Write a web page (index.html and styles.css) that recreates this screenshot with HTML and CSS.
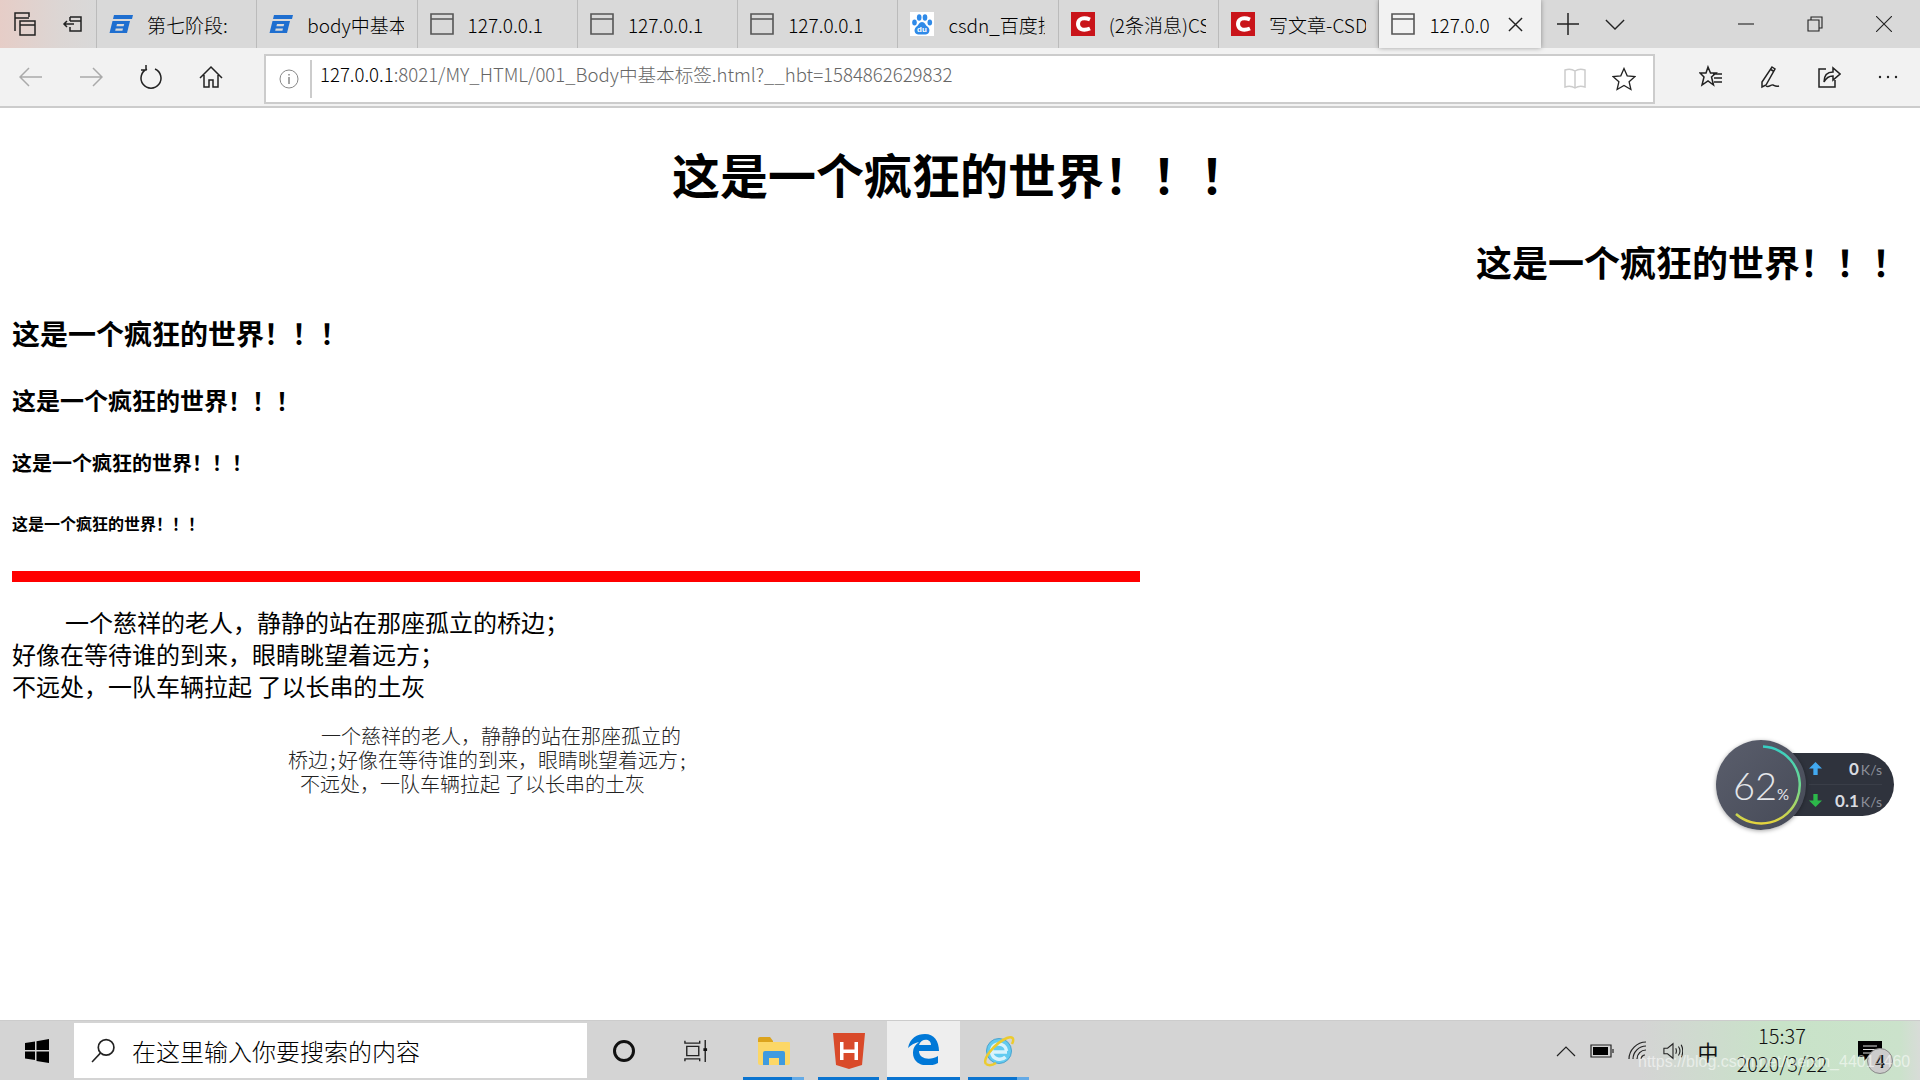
FILE: index.html
```html
<!DOCTYPE html>
<html lang="zh-CN">
<head>
    <meta charset="UTF-8" />
    <title>127.0.0.1</title>
    <link rel="stylesheet" href="styles.css">
</head>
<body>
    <div class="screen">
        <!-- tab strip -->
        <div class="tabbar">
            <div class="tab-tools">
                <svg class="icon" viewBox="0 0 24 24"><path d="M2 19V1h14v4M2 6h14M7 23V9h15v14zM7 13h15" /></svg>
                <svg class="icon" viewBox="0 0 24 24"><path d="M9 5h11v14H9v-4M9 9v-4M9 9h11M3 12h10M6 9l-3 3 3 3" /></svg>
            </div>
            <div class="tab">
                <svg class="fav" viewBox="0 0 24 24"><path class="fav-blue" d="M5 3h19l-1 4H4zM3.500 9H21l-3 12H.5zM8 12l-.6 2.300h7.200l.6-2.300zM6.700 16.500L6.200 18.800h7.200l.6-2.300z" /></svg>
                <span class="tab-title">第七阶段:</span>
            </div>
            <div class="tab">
                <svg class="fav" viewBox="0 0 24 24"><path class="fav-blue" d="M5 3h19l-1 4H4zM3.500 9H21l-3 12H.5zM8 12l-.6 2.300h7.200l.6-2.300zM6.700 16.500L6.200 18.800h7.200l.6-2.300z" /></svg>
                <span class="tab-title">body中基本标签</span>
            </div>
            <div class="tab">
                <svg class="fav page" viewBox="0 0 24 24"><path d="M1 2h22v20H1zM1 7h22" /></svg>
                <span class="tab-title">127.0.0.1</span>
            </div>
            <div class="tab">
                <svg class="fav page" viewBox="0 0 24 24"><path d="M1 2h22v20H1zM1 7h22" /></svg>
                <span class="tab-title">127.0.0.1</span>
            </div>
            <div class="tab">
                <svg class="fav page" viewBox="0 0 24 24"><path d="M1 2h22v20H1zM1 7h22" /></svg>
                <span class="tab-title">127.0.0.1</span>
            </div>
            <div class="tab">
                <svg class="fav baidu" viewBox="0 0 24 24">
                    <rect width="24" height="24" />
                    <ellipse cx="4.500" cy="10.500" rx="2.300" ry="3" />
                    <ellipse cx="9.200" cy="5.500" rx="2.300" ry="3.200" />
                    <ellipse cx="15" cy="5.500" rx="2.300" ry="3.200" />
                    <ellipse cx="19.800" cy="10.500" rx="2.300" ry="3" />
                    <path class="paw" d="M12 10c-3 0-3 3-6 5-3 3-1 8 3 7.500h6c4 .5 6-4.500 3-7.500-3-2-3-5-6-5z" />
                    <text x="12" y="20" class="du">du</text>
                </svg>
                <span class="tab-title">csdn_百度搜索</span>
            </div>
            <div class="tab">
                <svg class="fav csdn" viewBox="0 0 24 24"><rect width="24" height="24" /><path class="csdn-c" d="M19 7.500c-7-3-12-.5-12 4.500s5 7.500 12 4.500" /></svg>
                <span class="tab-title">(2条消息)CSDN</span>
            </div>
            <div class="tab">
                <svg class="fav csdn" viewBox="0 0 24 24"><rect width="24" height="24" /><path class="csdn-c" d="M19 7.500c-7-3-12-.5-12 4.500s5 7.500 12 4.500" /></svg>
                <span class="tab-title">写文章-CSDN</span>
            </div>
            <div class="tab active">
                <svg class="fav page" viewBox="0 0 24 24"><path d="M1 2h22v20H1zM1 7h22" /></svg>
                <span class="tab-title">127.0.0.1</span>
                <svg class="tab-close" viewBox="0 0 16 16"><path d="M1 1l14 14M15 1L1 15" /></svg>
            </div>
            <div class="tab-actions">
                <svg class="plus" viewBox="0 0 22 22"><path d="M11 0v22M0 11h22" /></svg>
                <svg class="chevron" viewBox="0 0 22 12"><path d="M1 1l10 10L21 1" /></svg>
            </div>
            <div class="win-buttons">
                <svg class="win-btn" viewBox="0 0 16 16"><path d="M0 8h16" /></svg>
                <svg class="win-btn" viewBox="0 0 16 16"><path d="M1 4h11v11H1zM4 4V1h11v11h-3" /></svg>
                <svg class="win-btn" viewBox="0 0 16 16"><path d="M0 0l16 16M16 0L0 16" /></svg>
            </div>
        </div>

        <!-- address bar -->
        <div class="toolbar">
            <div class="nav-buttons">
                <svg class="icon nav-off" viewBox="0 0 24 24"><path d="M1 12h22M10 3l-9 9 9 9" /></svg>
                <svg class="icon nav-off" viewBox="0 0 24 24"><path d="M1 12h22M14 3l9 9-9 9" /></svg>
                <svg class="icon" viewBox="0 0 24 24"><path d="M8 4a10 10 0 1 0 8 0M7 0v5H2" /></svg>
                <svg class="icon" viewBox="0 0 24 24"><path d="M1 13L12 2l11 11M5 10v12h5v-7h4v7h5V10" /></svg>
            </div>
            <div class="address">
                <svg class="info" viewBox="0 0 20 20"><circle cx="10" cy="10" r="9" /><path d="M10 8v7M10 5v1.500" /></svg>
                <div class="url"><span class="host">127.0.0.1</span>:8021/MY_HTML/001_Body中基本标签.html?__hbt=1584862629832</div>
                <svg class="icon reader" viewBox="0 0 24 24"><path d="M12 4C9 2 5 2 2 3v17c3-1 7-1 10 1 3-2 7-2 10-1V3c-3-1-7-1-10 1zM12 4v17" /></svg>
                <svg class="icon star" viewBox="0 0 24 24"><path d="M12 1.500l3.200 7.300 7.800.7-5.900 5.200 1.800 7.800-6.900-4.100-6.900 4.100 1.800-7.800L1 9.500l7.800-.7z" /></svg>
            </div>
            <div class="tool-buttons">
                <svg class="icon" viewBox="0 0 24 24"><path d="M9 2l2.500 6H17l-4.500 4 2 8L9 16l-6 4 2-8-4-4h6zM14 9h9M15 13h8M15 17h8" /></svg>
                <svg class="icon" viewBox="0 0 24 24"><path d="M14 2l3 2-9 16-4 2 0-5zM12 4l4 2.500M8 21c3 2 5-2 7-1s3 2 6 1" /></svg>
                <svg class="icon" viewBox="0 0 24 24"><path d="M9 4H2v18h16v-7M7 17c0-7 4-10 9-10V3l7 6-7 6v-4c-4 0-7 2-9 6z" /></svg>
                <svg class="icon more" viewBox="0 0 24 24"><circle cx="4" cy="12" r="1.200" /><circle cx="12" cy="12" r="1.200" /><circle cx="20" cy="12" r="1.200" /></svg>
            </div>
        </div>

        <!-- page content -->
        <div class="page-body">
            <h1>这是一个疯狂的世界！！！</h1>
            <h2>这是一个疯狂的世界！！！</h2>
            <h3>这是一个疯狂的世界！！！</h3>
            <h4>这是一个疯狂的世界！！！</h4>
            <h5>这是一个疯狂的世界！！！</h5>
            <h6>这是一个疯狂的世界！！！</h6>
            <hr class="red-line" />
            <p class="poem">
                <span class="first">一个慈祥的老人，静静的站在那座孤立的桥边；</span><br />
                好像在等待谁的到来，眼睛眺望着远方；<br />
                不远处，一队车辆拉起 了以长串的土灰
            </p>
            <p class="poem-small">
                <span class="line-one">一个慈祥的老人，静静的站在那座孤立的</span>
                <span class="line-two">桥边<b class="semi">;</b>好像在等待谁的到来，眼睛眺望着远方<b class="semi">;</b></span>
                <span class="line-three">不远处，一队车辆拉起 了以长串的土灰</span>
            </p>
        </div>

        <!-- windows taskbar -->
        <div class="taskbar">
            <div class="start">
                <svg class="win-logo" viewBox="0 0 24 24"><path d="M0 4l10-1.500V11H0zM11.500 2.300L24 0v11H11.500zM0 12.500h10V21L0 19.600zM11.500 12.500H24V24l-12.500-2z" /></svg>
            </div>
            <div class="search">
                <svg class="search-icon" viewBox="0 0 24 24"><circle cx="14.500" cy="9" r="7.500" /><path d="M9 14.500L1 23" /></svg>
                <span>在这里输入你要搜索的内容</span>
            </div>
            <div class="task-cell"><div class="cortana"></div></div>
            <div class="task-cell">
                <svg class="taskview" viewBox="0 0 26 24"><path d="M1 1v2.500h16V1M3 7h13v10H3zM1 23v-2.500h16V23M23 0v24" /><rect x="21" y="9" width="4" height="3" /></svg>
            </div>
            <div class="task-cell open">
                <svg class="app folder" viewBox="0 0 32 28">
                    <path class="folder-tab" d="M0 2a2 2 0 0 1 2-2h10l3 4v3H0z" />
                    <path class="folder-body" d="M0 5h31a1 1 0 0 1 1 1v20a2 2 0 0 1-2 2H2a2 2 0 0 1-2-2z" />
                    <path class="folder-arch" d="M5 28V16a2 2 0 0 1 2-2h18a2 2 0 0 1 2 2v12h-6v-7H11v7z" />
                </svg>
            </div>
            <div class="task-cell open single">
                <svg class="app hbuilder" viewBox="0 0 32 36">
                    <path class="shield" d="M0 0h32l-3 32-13 4-13-4z" />
                    <path class="shield-h" d="M7 9h3.500v7.500h11V9H25v18h-3.500v-7h-11v7H7z" />
                </svg>
            </div>
            <div class="task-cell edge-cell">
                <svg class="app" viewBox="0 0 32 32">
                    <path class="edge-e" d="M0 15C2 5 9 1 17 1c9 0 14 7 14 17H11c0 8 11 10 19 5v7c-9 5-25 3-25-10 0-5 2-8 6-11-5 1-8 3-11 6zM11 12h12c0-7-10-7-12 0z" />
                </svg>
            </div>
            <div class="task-cell open">
                <svg class="app" viewBox="0 0 32 32">
                    <circle class="ie-body" cx="16" cy="16" r="12.500" />
                    <path class="ie-e" d="M24 17H8.500M8.500 15c1-8 14-8 15 1M8.500 17c1 8 10 9 14 5" />
                    <path class="ie-ring" d="M3 29C-1 24 12 8 24 3c5-2 8 0 5 6" />
                    <path class="ie-ring" d="M3 29c3 2 7 1 10-1" />
                </svg>
            </div>
            <div class="tray">
                <div class="tray-cell">
                    <svg class="tray-icon" viewBox="0 0 20 20"><path d="M1 15l9-9 9 9" /></svg>
                </div>
                <div class="tray-cell">
                    <svg class="tray-icon battery" viewBox="0 0 24 16"><path d="M1 2h20v12H1zM23 6v4" /><rect x="3" y="4" width="15" height="8" /></svg>
                </div>
                <div class="tray-cell">
                    <svg class="tray-icon" viewBox="0 0 20 20"><path d="M1 18C1 9 9 1 18 1M5 18c0-7 6-13 13-13M9 18c0-5 4-9 9-9M13 18c0-2 2-4 4-4" /></svg>
                </div>
                <div class="tray-cell vol-cell">
                    <svg class="tray-icon" viewBox="0 0 22 20"><path d="M1 7h4l6-5v16l-6-5H1zM14 7c1 2 1 4 0 6M17 5c2 3 2 7 0 10M20 3c2 4 2 10 0 14" /></svg>
                </div>
                <div class="tray-cell ime">中</div>
                <div class="clock">
                    <div>15:37</div>
                    <div>2020/3/22</div>
                </div>
                <div class="notify">
                    <svg class="notify-icon" viewBox="0 0 24 20"><path d="M0 0h24v16h-14l-4 4v-4H0z" /><path class="notify-lines" d="M5 5h14M5 8.500h14M5 12h14" /></svg>
                    <div class="notify-badge">4</div>
                </div>
            </div>
        </div>

        <!-- floating network meter -->
        <div class="meter">
            <div class="meter-pill">
                <div class="meter-row">
                    <svg class="arrow arrow-up" viewBox="0 0 12 12"><path d="M6 0l6 6H8v6H4V6H0z" /></svg>
                    <span class="rate">0<small>K/s</small></span>
                </div>
                <div class="meter-row">
                    <svg class="arrow arrow-down" viewBox="0 0 12 12"><path d="M6 12L0 6h4V0h4v6h4z" /></svg>
                    <span class="rate">0.1<small>K/s</small></span>
                </div>
            </div>
            <div class="meter-dial">
                <svg class="meter-ring" viewBox="0 0 90 90">
                    <defs>
                        <linearGradient id="ring-grad" gradientUnits="userSpaceOnUse" x1="0" y1="6" x2="0" y2="84">
                            <stop offset="0" stop-color="#36cfc4" />
                            <stop offset="0.55" stop-color="#74d98a" />
                            <stop offset="1" stop-color="#e6d33c" />
                        </linearGradient>
                    </defs>
                    <path d="M47 6.500A38.500 38.500 0 1 1 20 74" />
                </svg>
                <span class="percent">62<small>%</small></span>
            </div>
        </div>

        <div class="watermark">https://blog.csdn.net/weixin_44014460</div>
    </div>
</body>
</html>
```

FILE: styles.css
```css
* {
    box-sizing: border-box;
}

body {
    margin: 0;
    font-family: "Noto Sans CJK SC", "Liberation Sans", sans-serif;
    color: #000;
    background: #fff;
}

svg {
    display: block;
    flex: none;
}

svg path {
    fill: none;
    stroke: #222;
    stroke-width: 1.5;
}

.screen {
    position: relative;
    width: 1920px;
    height: 1080px;
    display: flex;
    flex-direction: column;
    overflow: hidden;
}

/* tab strip */
.tabbar {
    height: 48px;
    flex: none;
    display: flex;
    background: #d9d9d9;
}

.tab-tools {
    width: 97px;
    flex: none;
    display: flex;
    align-items: center;
    gap: 24px;
    padding-left: 13px;
    background: linear-gradient(90deg, #e6cdc7 0, #dcd6d4 60px, #d9d9d9 97px);
    border-right: 1px solid #bbb;
}

.icon {
    width: 24px;
    height: 24px;
}

.tab {
    width: 160.3px;
    flex: none;
    display: flex;
    align-items: center;
    padding-left: 12px;
    gap: 14px;
    border-right: 1px solid #bbb;
    font-size: 19px;
    font-weight: 300;
    color: #000;
}

.tab.active {
    position: relative;
    width: 162px;
    background: #f2f2f2;
    border-right: none;
    box-shadow: 0 0 5px rgba(0, 0, 0, 0.35);
}

.fav {
    width: 24px;
    height: 24px;
}

.fav .fav-blue {
    fill: #1f6fd0;
    fill-rule: evenodd;
    stroke: none;
}

.fav.page path {
    stroke: #555;
    stroke-width: 1.6;
}

.baidu rect {
    fill: #fff;
}

.baidu ellipse, .baidu .paw {
    fill: #2f8ae8;
    stroke: none;
}

.baidu .du {
    fill: #fff;
    font-family: "Liberation Sans", sans-serif;
    font-size: 8px;
    font-weight: 700;
    text-anchor: middle;
}

.csdn rect {
    fill: #c9141a;
}

.fav .csdn-c {
    stroke: #fff;
    stroke-width: 4;
}

.tab-title {
    width: 97px;
    overflow: hidden;
    white-space: nowrap;
}

.tab.active .tab-title {
    width: 61px;
}

.tab-close {
    width: 15px;
    height: 15px;
    margin-left: 4px;
}

.tab-actions {
    display: flex;
    align-items: center;
    gap: 26px;
    padding-left: 16px;
}

.plus {
    width: 22px;
    height: 22px;
}

.chevron {
    width: 20px;
    height: 11px;
}

.win-buttons {
    margin-left: auto;
    display: flex;
    align-items: center;
    gap: 53px;
    padding-right: 28px;
}

.win-btn {
    width: 16px;
    height: 16px;
}

.win-btn path {
    stroke-width: 1.1;
}

/* address bar */
.toolbar {
    height: 60px;
    flex: none;
    display: flex;
    align-items: flex-start;
    background: #f2f2f2;
    border-bottom: 2px solid #ccc;
}

.nav-buttons {
    width: 264px;
    height: 58px;
    flex: none;
    display: flex;
    align-items: center;
    gap: 36px;
    padding-left: 19px;
}

.nav-off path {
    stroke: #aaa;
}

.address {
    width: 1391px;
    height: 50px;
    flex: none;
    margin-top: 6px;
    display: flex;
    align-items: center;
    background: #fff;
    border: 2px solid #ccc;
}

.info {
    width: 20px;
    height: 20px;
    margin-left: 13px;
}

.info circle {
    fill: none;
    stroke: #888;
    stroke-width: 1;
}

.info path {
    stroke: #888;
}

.url {
    margin-left: 11px;
    padding-left: 8px;
    height: 38px;
    line-height: 28px;
    border-left: 2px solid #ccc;
    font-size: 18.6px;
    font-weight: 300;
    color: #666;
    white-space: nowrap;
    flex: 1;
}

.host {
    color: #000;
}

.reader path {
    stroke: #ccc;
}

.star {
    margin-left: 25px;
    margin-right: 17px;
}

.star path {
    stroke-width: 1.3;
}

.tool-buttons {
    flex: 1;
    height: 58px;
    display: flex;
    align-items: center;
    gap: 35px;
    padding-left: 44px;
}

.more circle {
    fill: #222;
}

/* page content */
.page-body {
    flex: 1;
    padding: 0 12px;
    min-height: 0;
}

h1, h2, h3, h4, h5, h6, p, hr {
    margin: 0;
}

h1 {
    margin-top: 35px;
    font-size: 48px;
    line-height: 60px;
    text-align: center;
}

h2 {
    margin-top: 34px;
    font-size: 36px;
    line-height: 48px;
    text-align: right;
}

h3 {
    margin-top: 30px;
    font-size: 28px;
    line-height: 36px;
}

h4 {
    margin-top: 33px;
    font-size: 24px;
    line-height: 32px;
}

h5 {
    margin-top: 33px;
    font-size: 20px;
    line-height: 28px;
}

h6 {
    margin-top: 35px;
    font-size: 16px;
    line-height: 22px;
}

.red-line {
    width: 1128px;
    height: 11px;
    margin-top: 37px;
    border: none;
    background: #f00;
}

.poem {
    margin-top: 24px;
    font-size: 24px;
    line-height: 32px;
}

.poem .first {
    padding-left: 53px;
}

.poem-small {
    margin-top: 23px;
    margin-left: 276px;
    font-family: "Liberation Serif", "Noto Sans CJK SC", serif;
    font-size: 20px;
    line-height: 24px;
    font-weight: 300;
    color: #222;
}

.poem-small > span {
    display: block;
    white-space: nowrap;
}

.line-one {
    padding-left: 33px;
}

.line-three {
    padding-left: 12px;
}

.semi {
    display: inline-block;
    width: 10px;
    text-align: center;
}

/* taskbar */
.taskbar {
    height: 60px;
    flex: none;
    display: flex;
    align-items: stretch;
    background: linear-gradient(90deg, #d4d4d4 0, #d4d4d4 1640px, #c8e3c8 1780px, #cbe2cb 1900px, #d8dcd8 1920px);
    border-top: 1px solid #ccc;
}

.start {
    width: 74px;
    display: flex;
    align-items: center;
    justify-content: center;
}

.win-logo {
    width: 24px;
    height: 24px;
}

.win-logo path {
    fill: #000;
    stroke: none;
}

.search {
    width: 513px;
    margin: 2px 0;
    display: flex;
    align-items: center;
    gap: 16px;
    padding-left: 17px;
    background: #fff;
    font-size: 24px;
    font-weight: 300;
    color: #000;
}

.search-icon {
    width: 25px;
    height: 25px;
}

.search-icon circle {
    fill: none;
    stroke: #222;
    stroke-width: 1.6;
}

.task-cell {
    position: relative;
    width: 73px;
    margin-right: 2px;
    display: flex;
    align-items: center;
    justify-content: center;
}

.task-cell.open::after {
    content: "";
    position: absolute;
    left: 6px;
    right: 6px;
    bottom: 0;
    height: 3px;
    background: linear-gradient(90deg, #0a74d0 0, #0a74d0 80%, #64aae6 80%);
}

.task-cell.single::after {
    background: #0a74d0;
}

.edge-cell {
    background: #eee;
    border-bottom: 3px solid #0a74d0;
}

.cortana {
    width: 22px;
    height: 22px;
    border: 3px solid #111;
    border-radius: 50%;
}

.taskview {
    width: 24px;
    height: 24px;
    margin-right: 5px;
}

.taskview rect {
    fill: #111;
}

.app {
    width: 32px;
    height: 32px;
}

.app.folder {
    height: 28px;
}

.app.hbuilder {
    height: 36px;
}

.folder-tab {
    fill: #dca31c;
    stroke: none;
}

.folder-body {
    fill: #fcd767;
    stroke: none;
}

.folder-arch {
    fill: #3f9be0;
    stroke: none;
}

.shield {
    fill: #d94a2a;
    stroke: none;
}

.shield-h {
    fill: #fff;
    stroke: none;
}

.edge-e {
    fill: #0078d7;
    fill-rule: evenodd;
    stroke: none;
}

.ie-body {
    fill: #63cbf0;
    stroke: #4aa3cf;
    stroke-width: 1;
}

.ie-e {
    stroke: #d8f3fc;
    stroke-width: 3.500;
}

.ie-ring {
    stroke: #eccb2e;
    stroke-width: 2.500;
}

.tray {
    margin-left: auto;
    display: flex;
    align-items: stretch;
    padding-right: 18px;
}

.tray-cell {
    width: 36px;
    display: flex;
    align-items: center;
    justify-content: center;
}

.vol-cell {
    width: 34px;
}

.tray-icon {
    width: 20px;
    height: 20px;
}

.tray-icon path {
    stroke-width: 1.2;
}

.battery {
    width: 24px;
    height: 16px;
}

.battery rect {
    fill: #000;
}

.ime {
    font-size: 21px;
    color: #111;
}

.clock {
    width: 112px;
    padding-bottom: 2px;
    display: flex;
    flex-direction: column;
    justify-content: center;
    align-items: center;
    gap: 4px;
    font-size: 20px;
    line-height: 24px;
    font-weight: 300;
    color: #111;
}

.notify {
    position: relative;
    width: 64px;
    display: flex;
    align-items: center;
    justify-content: center;
}

.notify-icon {
    width: 24px;
    height: 20px;
}

.notify-icon path {
    fill: #000;
    stroke: none;
}

.notify-icon .notify-lines {
    fill: none;
    stroke: #ddd;
    stroke-width: 1;
}

.notify-badge {
    position: absolute;
    left: 29px;
    top: 27px;
    width: 26px;
    height: 26px;
    border: 1px solid #888;
    border-radius: 50%;
    background: #ccc;
    font-size: 17px;
    font-weight: 700;
    line-height: 24px;
    text-align: center;
    color: #111;
}

/* floating network meter */
.meter {
    position: absolute;
    left: 1716px;
    top: 740px;
    width: 180px;
    height: 90px;
    font-family: Lato, "Liberation Sans", sans-serif;
}

.meter-pill {
    position: absolute;
    left: 45px;
    top: 13px;
    width: 133px;
    height: 63px;
    padding: 0 12px 0 48px;
    border-radius: 0 32px 32px 0;
    background: #2f333d;
    display: flex;
    flex-direction: column;
}

.meter-row {
    flex: 1;
    display: flex;
    align-items: center;
    justify-content: space-between;
}

.meter-row + .meter-row {
    border-top: 1px solid #3a3e48;
}

.arrow {
    width: 13px;
    height: 13px;
}

.arrow-up path {
    fill: #42a9f0;
    stroke: none;
}

.arrow-down path {
    fill: #2cb84a;
    stroke: none;
}

.rate {
    font-size: 17px;
    font-weight: 700;
    color: #d9dbe0;
}

.rate small {
    margin-left: 2px;
    font-size: 14px;
    font-weight: 400;
    color: #8b8f99;
}

.meter-dial {
    position: absolute;
    left: 0;
    top: 0;
    width: 90px;
    height: 90px;
    border-radius: 50%;
    background: linear-gradient(135deg, #5a5e6c, #464a57);
    box-shadow: 0 1px 4px rgba(0, 0, 0, 0.35);
    display: flex;
    align-items: center;
    justify-content: center;
}

.meter-ring {
    position: absolute;
    left: 0;
    top: 0;
    width: 90px;
    height: 90px;
}

.meter-ring path {
    stroke: url(#ring-grad);
    stroke-width: 2.500;
}

.percent {
    font-size: 38px;
    font-weight: 300;
    color: #e4e6ea;
}

.percent small {
    font-size: 15px;
    font-weight: 400;
}

.watermark {
    position: absolute;
    left: 1638px;
    top: 1052px;
    font-family: "Liberation Sans", sans-serif;
    font-size: 16px;
    line-height: 20px;
    white-space: nowrap;
    color: rgba(255, 255, 255, 0.55);
}
```
